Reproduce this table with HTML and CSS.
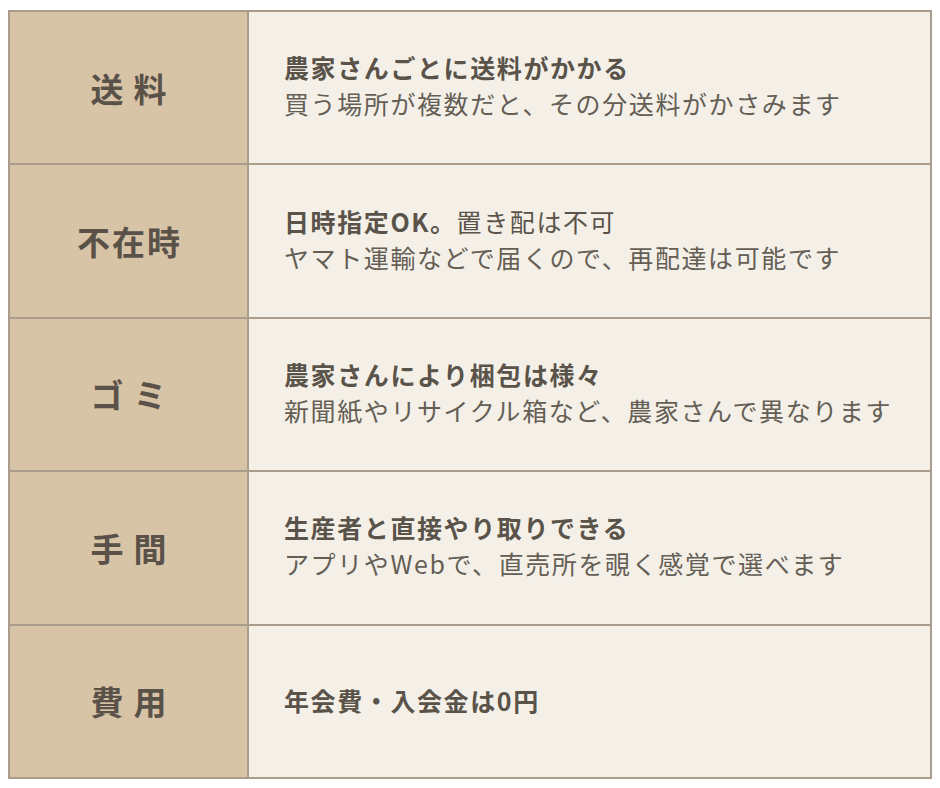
FILE: index.html
```html
<!DOCTYPE html>
<html lang="ja">
<head>
<meta charset="utf-8">
<link rel="stylesheet" href="styles.css">
</head>
<body>
<div class="page">
  <div class="table">
    <div class="label wide">送料</div>
    <div class="desc">
      <p class="lead">農家さんごとに送料がかかる</p>
      <p class="sub">買う場所が複数だと、その分送料がかさみます</p>
    </div>
    <div class="label">不在時</div>
    <div class="desc">
      <p class="lead">日時指定OK。<span class="normal">置き配は不可</span></p>
      <p class="sub">ヤマト運輸などで届くので、再配達は可能です</p>
    </div>
    <div class="label wide">ゴミ</div>
    <div class="desc">
      <p class="lead">農家さんにより梱包は様々</p>
      <p class="sub">新聞紙やリサイクル箱など、農家さんで異なります</p>
    </div>
    <div class="label wide">手間</div>
    <div class="desc">
      <p class="lead">生産者と直接やり取りできる</p>
      <p class="sub">アプリやWebで、直売所を覗く感覚で選べます</p>
    </div>
    <div class="label wide">費用</div>
    <div class="desc single">
      <p class="lead">年会費・入会金は0円</p>
    </div>
  </div>
</div>
</body>
</html>
```

FILE: styles.css
```css
html, body {
  margin: 0;
  padding: 0;
  background: #ffffff;
}
.page {
  padding: 10px 8px;
  font-family: "Noto Sans CJK JP", "Noto Sans", sans-serif;
}
.table {
  width: 924px;
  box-sizing: border-box;
  display: grid;
  grid-template-columns: 237px 1fr;
  grid-auto-rows: 151.4px;
  gap: 2px;
  border: 2px solid #ab9d8c;
  background: #ab9d8c;
}
.label {
  background: #d7c4a7;
  color: #5a5249;
  font-weight: 700;
  font-size: 33px;
  letter-spacing: 2px;
  display: flex;
  align-items: center;
  justify-content: center;
  padding-left: 2px;
  box-sizing: border-box;
}
.label.wide {
  letter-spacing: 10px;
  padding-left: 10px;
}
.desc {
  background: #f4f0e8;
  color: #5d564d;
  display: flex;
  flex-direction: column;
  justify-content: center;
  padding-left: 35px;
  padding-bottom: 5px;
}
.desc.single {
  padding-bottom: 2px;
}
.desc p {
  margin: 0;
  font-size: 25px;
  line-height: 36px;
  letter-spacing: 1.6px;
}
.lead {
  font-weight: 700;
  color: #5a534a;
}
.normal {
  font-weight: 400;
}
.sub {
  font-weight: 400;
  color: #655e55;
}
```
